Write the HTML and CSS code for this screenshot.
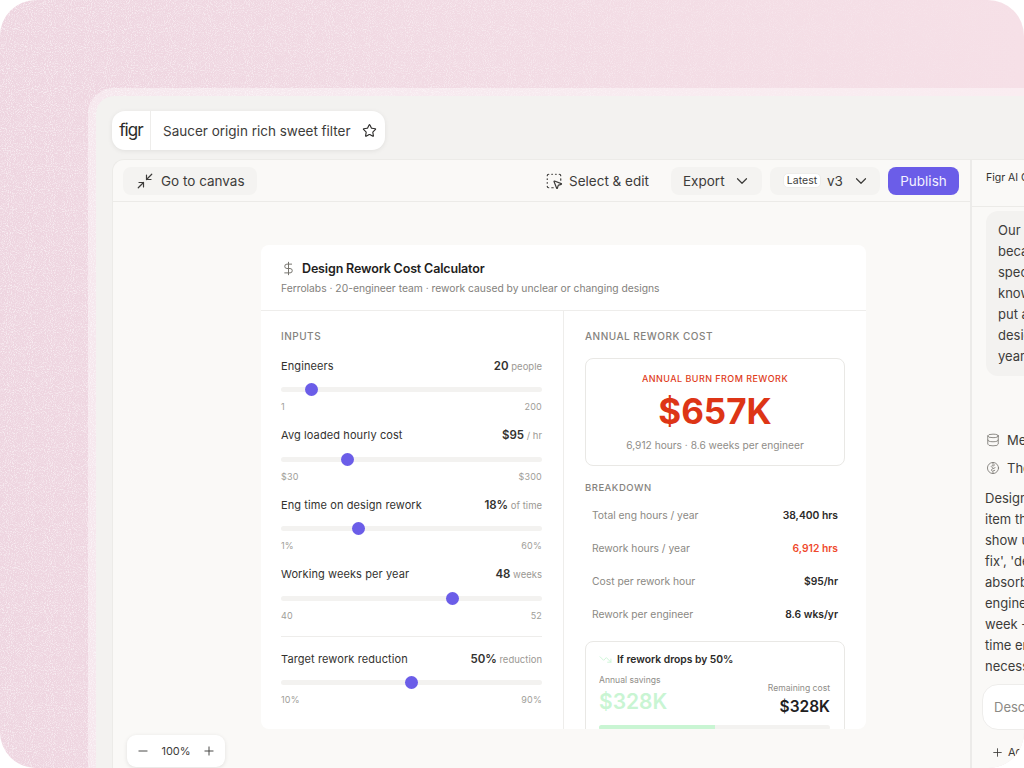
FILE: index.html
```html
<!DOCTYPE html>
<html>
<head>
    <title>Saucer origin rich sweet filter</title>
    <link rel="stylesheet" href="styles.css">
</head>
<body>
<div class="frame">
    <svg class="noise" width="1024" height="768">
        <defs>
            <filter id="grain" x="0" y="0" width="100%" height="100%">
                <feTurbulence type="fractalNoise" baseFrequency="0.95" numOctaves="2" seed="4"/>
                <feColorMatrix values="0 0 0 0 1  0 0 0 0 1  0 0 0 0 1  3.2 0 0 0 -1.45"/>
            </filter>
            <linearGradient id="fade">
                <stop offset="0" stop-color="#fff" stop-opacity="0.55"/>
                <stop offset="0.5" stop-color="#fff" stop-opacity="0.4"/>
                <stop offset="1" stop-color="#fff" stop-opacity="0.06"/>
            </linearGradient>
            <mask id="fade-mask"><rect width="1024" height="768" fill="url(#fade)"/></mask>
        </defs>
        <g mask="url(#fade-mask)"><rect width="1024" height="768" filter="url(#grain)"/></g>
    </svg>

    <div class="app">
        <div class="title-pill">
            <span class="logo">figr</span>
            <span class="title-text">Saucer origin rich sweet filter</span>
            <svg class="icon star" viewBox="0 0 24 24"><path d="M11.5 2.8a.55.55 0 0 1 1 0l2.5 5.1a1 1 0 0 0 .75.55l5.6.82a.55.55 0 0 1 .3.94l-4.05 3.95a1 1 0 0 0-.29.88l.96 5.58a.55.55 0 0 1-.8.58l-5-2.63a1 1 0 0 0-.93 0l-5 2.63a.55.55 0 0 1-.8-.58l.96-5.58a1 1 0 0 0-.29-.88L2.36 10.2a.55.55 0 0 1 .3-.94l5.6-.82a1 1 0 0 0 .75-.55z"/></svg>
        </div>

        <div class="workspace">
            <div class="main">
                <div class="toolbar">
                    <div class="btn canvas-btn">
                        <svg class="icon" viewBox="0 0 24 24"><path d="m14 10 7-7"/><path d="M20 10h-6V4"/><path d="m3 21 7-7"/><path d="M4 14h6v6"/></svg>
                        Go to canvas
                    </div>
                    <div class="btn select-btn">
                        <svg class="icon" viewBox="0 0 24 24"><path d="M12.034 12.681a.498.498 0 0 1 .647-.647l9 3.5a.5.5 0 0 1-.033.943l-3.444 1.068a1 1 0 0 0-.66.66l-1.067 3.443a.5.5 0 0 1-.943.033z"/><path d="M5 3a2 2 0 0 0-2 2"/><path d="M19 3a2 2 0 0 1 2 2"/><path d="M5 21a2 2 0 0 1-2-2"/><path d="M9 3h1"/><path d="M9 21h2"/><path d="M14 3h1"/><path d="M3 9v1"/><path d="M21 9v2"/><path d="M3 14v1"/></svg>
                        Select &amp; edit
                    </div>
                    <div class="btn export-btn">
                        Export
                        <svg class="icon" viewBox="0 0 24 24"><path d="m6 9 6 6 6-6"/></svg>
                    </div>
                    <div class="btn version-btn">
                        <span class="chip">Latest</span>
                        v3
                        <svg class="icon" viewBox="0 0 24 24"><path d="m6 9 6 6 6-6"/></svg>
                    </div>
                    <div class="btn publish-btn">Publish</div>
                </div>

                <div class="canvas">
                    <div class="card">
                        <div class="card-head">
                            <div class="card-title">
                                <svg class="icon" viewBox="0 0 24 24"><path d="M12 2v20"/><path d="M17 5H9.5a3.5 3.5 0 0 0 0 7h5a3.5 3.5 0 0 1 0 7H6"/></svg>
                                Design Rework Cost Calculator
                            </div>
                            <p class="card-sub">Ferrolabs · 20-engineer team · rework caused by unclear or changing designs</p>
                        </div>
                        <div class="card-body">
                            <div class="inputs">
                                <h4 class="section-label">INPUTS</h4>

                                <div class="field">
                                    <div class="field-top"><span>Engineers</span><span class="val"><b>20</b> people</span></div>
                                    <input type="range" min="1" max="200" value="20">
                                    <div class="field-range"><span>1</span><span>200</span></div>
                                </div>
                                <div class="field">
                                    <div class="field-top"><span>Avg loaded hourly cost</span><span class="val"><b>$95</b> / hr</span></div>
                                    <input type="range" min="30" max="300" value="95">
                                    <div class="field-range"><span>$30</span><span>$300</span></div>
                                </div>
                                <div class="field">
                                    <div class="field-top"><span>Eng time on design rework</span><span class="val"><b>18%</b> of time</span></div>
                                    <input type="range" min="1" max="60" value="18">
                                    <div class="field-range"><span>1%</span><span>60%</span></div>
                                </div>
                                <div class="field">
                                    <div class="field-top"><span>Working weeks per year</span><span class="val"><b>48</b> weeks</span></div>
                                    <input type="range" min="40" max="52" value="48">
                                    <div class="field-range"><span>40</span><span>52</span></div>
                                </div>

                                <div class="field target">
                                    <div class="field-top"><span>Target rework reduction</span><span class="val"><b>50%</b> reduction</span></div>
                                    <input type="range" min="10" max="90" value="50">
                                    <div class="field-range"><span>10%</span><span>90%</span></div>
                                </div>
                            </div>

                            <div class="results">
                                <h4 class="section-label">ANNUAL REWORK COST</h4>
                                <div class="burn">
                                    <div class="burn-label">ANNUAL BURN FROM REWORK</div>
                                    <div class="burn-num">$657K</div>
                                    <div class="burn-sub">6,912 hours · 8.6 weeks per engineer</div>
                                </div>

                                <h4 class="section-label small">BREAKDOWN</h4>
                                <div class="row"><span>Total eng hours / year</span><b>38,400 hrs</b></div>
                                <div class="row"><span>Rework hours / year</span><b class="red">6,912 hrs</b></div>
                                <div class="row"><span>Cost per rework hour</span><b>$95/hr</b></div>
                                <div class="row"><span>Rework per engineer</span><b>8.6 wks/yr</b></div>

                                <div class="savings">
                                    <div class="savings-title">
                                        <svg class="icon" viewBox="0 0 24 24"><path d="M16 17h6v-6"/><path d="m22 17-8.5-8.5-5 5L2 7"/></svg>
                                        If rework drops by 50%
                                    </div>
                                    <div class="savings-nums">
                                        <div>
                                            <div class="savings-label">Annual savings</div>
                                            <div class="savings-green">$328K</div>
                                        </div>
                                        <div class="savings-right">
                                            <div class="savings-label">Remaining cost</div>
                                            <div class="savings-dark">$328K</div>
                                        </div>
                                    </div>
                                    <div class="bar"><div class="bar-fill"></div></div>
                                </div>
                            </div>
                        </div>
                    </div>

                    <div class="zoom-pill">
                        <svg class="icon" viewBox="0 0 24 24"><path d="M5 12h14"/></svg>
                        <span>100%</span>
                        <svg class="icon" viewBox="0 0 24 24"><path d="M5 12h14"/><path d="M12 5v14"/></svg>
                    </div>
                </div>
            </div>

            <div class="chat">
                <div class="chat-head">Figr AI Chat</div>
                <div class="bubble">Our engineers keep redoing work<br>because designs change late and<br>specs are vague. We don't really<br>know what it costs us. Can you<br>put a number on how much<br>design rework burns every<br>year at Ferrolabs?</div>
                <div class="step step-first">
                    <svg class="icon" viewBox="0 0 24 24"><ellipse cx="12" cy="5" rx="9" ry="3"/><path d="M3 5v14a9 3 0 0 0 18 0V5"/><path d="M3 12a9 3 0 0 0 18 0"/></svg>
                    Memory
                </div>
                <div class="step">
                    <svg class="icon" viewBox="0 0 24 24"><circle cx="12" cy="12" r="9.5"/><path d="M12 2.5v4l-3 3 3 3-3 3 3 3v3"/><path d="M12 9l3-2.5M12 13l3.5-1.5M12 17l3-1"/></svg>
                    Thought
                </div>
                <div class="reply">Design rework is the line<br>item that never shows up on<br>show up in a budget: 'quick<br>fix', 'design tweak' and more<br>absorbed silently by the<br>engineers, a few hours each<br>week - so this tool prices the<br>time engineers spend on un-<br>necessary rework every year.</div>
                <div class="prompt">Describe what to change</div>
                <div class="prompt-tools">
                    <svg class="icon" viewBox="0 0 24 24"><path d="M5 12h14"/><path d="M12 5v14"/></svg>
                    Add
                </div>
            </div>
        </div>
    </div>
</div>
</body>
</html>
```

FILE: styles.css
```css
* {
    margin: 0;
    padding: 0;
    box-sizing: border-box;
    font-family: Inter, "Liberation Sans", sans-serif;
}

body {
    background: #fff;
    width: 1024px;
    height: 768px;
    overflow: hidden;
}

.icon {
    fill: none;
    stroke: currentColor;
    stroke-width: 1.6;
    stroke-linecap: round;
    stroke-linejoin: round;
    flex: none;
}

.frame {
    position: relative;
    width: 1024px;
    height: 768px;
    border-radius: 36px;
    overflow: hidden;
    background: linear-gradient(90deg, #eed5e0, #f2dbe4 50%, #f6e0e7);
    padding: 88px 0 0 88px;
}

.noise {
    position: absolute;
    left: 0;
    top: 0;
}

.app {
    position: relative;
    width: 936px;
    height: 680px;
    background: #f3f2f0;
    background-clip: padding-box;
    border: 8px solid rgba(255, 255, 255, 0.42);
    border-width: 8px 0 0 8px;
    border-top-left-radius: 26px;
    padding: 15px 0 0 16px;
    display: flex;
    flex-direction: column;
    gap: 9px;
}

/* title pill */
.title-pill {
    width: 273px;
    height: 39px;
    background: #fff;
    border-radius: 13px;
    box-shadow: 0 1px 5px rgba(0, 0, 0, 0.08);
    display: flex;
    align-items: center;
    flex: none;
    color: #3d3c3a;
}

.logo {
    width: 39px;
    height: 39px;
    line-height: 38px;
    text-align: center;
    font-size: 17px;
    letter-spacing: -0.9px;
    color: #2c2b2a;
    border-right: 1px solid #eeedeb;
    flex: none;
}

.title-text {
    font-size: 13.5px;
    margin-left: 12px;
    white-space: nowrap;
}

.star {
    width: 15px;
    height: 15px;
    margin-left: 11px;
    stroke-width: 1.8;
    color: #2c2b2a;
}

/* workspace */
.workspace {
    flex: 1;
    display: flex;
    background: #faf9f7;
    border: 1px solid #ecebe8;
    border-width: 1px 0 0 1px;
    border-top-left-radius: 12px;
    min-height: 0;
}

.main {
    width: 857px;
    flex: none;
    display: flex;
    flex-direction: column;
    position: relative;
}

.toolbar {
    height: 42px;
    border-bottom: 1px solid #ecebe8;
    display: flex;
    align-items: center;
    padding: 0 10px;
    flex: none;
}

.btn {
    height: 28px;
    border-radius: 8px;
    display: flex;
    align-items: center;
    font-size: 13.5px;
    color: #3d3c3a;
    background: #f4f3f1;
    white-space: nowrap;
}

.btn .icon {
    width: 18px;
    height: 18px;
}

.canvas-btn {
    width: 134px;
    padding-left: 13px;
    gap: 7px;
    margin-right: 288px;
}

.select-btn {
    background: none;
    width: 106px;
    gap: 6px;
    margin-right: 20px;
}

.export-btn {
    width: 91px;
    padding-left: 12px;
    gap: 8px;
    margin-right: 8px;
}

.version-btn {
    width: 110px;
    padding-left: 13px;
    margin-right: 8px;
}

.version-btn .icon {
    margin-left: 9px;
}

.chip {
    width: 38px;
    height: 15px;
    line-height: 14px;
    text-align: center;
    font-size: 10.5px;
    background: #fff;
    border: 1px solid #eeedeb;
    border-radius: 5px;
    margin-right: 6px;
}

.publish-btn {
    width: 71px;
    justify-content: center;
    background: #6b5de8;
    color: #f3f1ff;
}

.canvas {
    flex: 1;
    padding: 43px 0 0 148px;
    min-height: 0;
}

/* calculator card */
.card {
    width: 605px;
    height: 484px;
    background: #fff;
    border-radius: 8px;
    overflow: hidden;
}

.card-head {
    height: 66px;
    border-bottom: 1px solid #eeedeb;
    padding: 13px 20px 0;
}

.card-title {
    display: flex;
    align-items: center;
    gap: 6px;
    font-size: 12.5px;
    letter-spacing: -0.15px;
    font-weight: 600;
    color: #1f1e1d;
    height: 20px;
}

.card-title .icon {
    width: 15px;
    height: 15px;
    color: #77756f;
}

.card-sub {
    font-size: 10.3px;
    color: #83817c;
    margin-top: 4px;
}

.card-body {
    display: flex;
}

.inputs {
    width: 303px;
    padding: 19px 21px 0 20px;
    border-right: 1px solid #eeedeb;
    height: 420px;
    flex: none;
}

.results {
    flex: 1;
    padding: 19px 21px 0 21px;
}

.section-label {
    font-size: 10px;
    line-height: 12px;
    font-weight: 500;
    color: #85837e;
    letter-spacing: 0.5px;
    margin-bottom: 16px;
}

.inputs .section-label {
    margin-bottom: 15.75px;
}

.section-label.small {
    margin: 16px 0 4px;
    font-size: 9.5px;
}

.field {
    height: 69.5px;
}

.field-top {
    display: flex;
    justify-content: space-between;
    align-items: baseline;
    font-size: 11px;
    line-height: 16px;
    color: #33322f;
    letter-spacing: 0.1px;
}

.val {
    font-size: 9.5px;
    color: #9b9994;
    letter-spacing: 0;
}

.val b {
    font-size: 11.5px;
    font-weight: 600;
    color: #33322f;
}

input[type=range] {
    display: block;
    width: 261px;
    height: 13px;
    margin-top: 8.25px;
    background: transparent;
    -webkit-appearance: none;
    appearance: none;
}

input[type=range]::-webkit-slider-runnable-track {
    height: 5px;
    background: #f3f2f0;
    border-radius: 3px;
}

input[type=range]::-webkit-slider-thumb {
    -webkit-appearance: none;
    width: 13px;
    height: 13px;
    margin-top: -4px;
    border-radius: 50%;
    background: #6b5de8;
}

.field-range {
    display: flex;
    justify-content: space-between;
    font-size: 9px;
    line-height: 12px;
    color: #a09e99;
    margin-top: 5px;
    letter-spacing: 0.2px;
}

.target {
    border-top: 1px solid #eeedeb;
    padding-top: 14px;
    height: auto;
}

/* right column */
.burn {
    height: 108px;
    border: 1px solid #e9e8e5;
    border-radius: 8px;
    text-align: center;
    padding-top: 14px;
}

.burn-label {
    font-size: 9px;
    line-height: 12px;
    font-weight: 500;
    color: #e03c1c;
    letter-spacing: 0.45px;
}

.burn-num {
    font-size: 35px;
    line-height: 52px;
    font-weight: 700;
    color: #dd3516;
}

.burn-sub {
    font-size: 10.2px;
    line-height: 14px;
    color: #8f8d88;
    margin-top: 1px;
}

.row {
    height: 33px;
    padding: 0 7px;
    display: flex;
    justify-content: space-between;
    align-items: center;
    font-size: 10.3px;
    color: #8b8984;
}

.row b {
    font-weight: 600;
    color: #2b2a28;
}

.row b.red {
    color: #ef4a2d;
}

.savings {
    margin-top: 11px;
    border: 1px solid #e9e8e5;
    border-radius: 8px;
    padding: 10px 14px 0 13px;
    height: 110px;
}

.savings-title {
    display: flex;
    align-items: center;
    gap: 5px;
    font-size: 10.3px;
    line-height: 14px;
    font-weight: 600;
    color: #2b2a28;
}

.savings-title .icon {
    width: 13px;
    height: 13px;
    color: #c9f5d3;
}

.savings-nums {
    display: flex;
    justify-content: space-between;
    margin-top: 8px;
    height: 51px;
}

.savings-right {
    text-align: right;
    padding-top: 8px;
}

.savings-label {
    font-size: 8.6px;
    line-height: 12px;
    color: #8f8d88;
}

.savings-green {
    font-size: 21px;
    line-height: 32px;
    font-weight: 600;
    color: #c9f5d3;
}

.savings-dark {
    font-size: 15.5px;
    line-height: 26px;
    font-weight: 600;
    color: #22211f;
}

.bar {
    height: 5px;
    background: #f3f2f0;
    border-radius: 3px;
    overflow: hidden;
}

.bar-fill {
    width: 50%;
    height: 100%;
    background: #c9f5d3;
}

/* zoom control sits over the canvas */
.zoom-pill {
    position: absolute;
    left: 14px;
    top: 575px;
    width: 98px;
    height: 32px;
    background: #fff;
    border-radius: 9px;
    box-shadow: 0 1px 4px rgba(0, 0, 0, 0.1);
    display: flex;
    align-items: center;
    justify-content: space-between;
    padding: 0 9px;
    font-size: 11px;
    color: #3d3c3a;
}

.zoom-pill .icon {
    width: 14px;
    height: 14px;
}

/* chat panel */
.chat {
    flex: 1;
    border-left: 2px solid #ecebe9;
    overflow: hidden;
    white-space: nowrap;
    color: #3d3c3a;
    font-size: 13px;
    line-height: 21px;
}

.chat-head {
    height: 47px;
    border-bottom: 1px solid #ecebe8;
    padding: 8px 0 0 14px;
    font-size: 10.5px;
    font-weight: 400;
    color: #33322f;
    line-height: 20px;
}

.bubble {
    width: 200px;
    height: 165px;
    margin: 4px 0 0 14px;
    background: #f3f2f0;
    border-radius: 12px;
    padding: 9px 0 0 12px;
}

.step {
    height: 28px;
    display: flex;
    align-items: center;
    gap: 7px;
    padding-left: 14px;
}

.step .icon {
    width: 14px;
    height: 14px;
    stroke-width: 1.4;
    color: #77756f;
}

.step-first {
    margin-top: 50px;
}

.reply {
    padding: 6px 0 0 13px;
}

.prompt {
    width: 200px;
    height: 46px;
    margin: 7px 0 0 10px;
    background: #fff;
    border: 1px solid #eeedeb;
    border-radius: 16px;
    padding: 12px 0 0 11px;
    color: #8b8984;
}

.prompt-tools {
    display: flex;
    align-items: center;
    gap: 4px;
    padding: 12px 0 0 19px;
    font-size: 11px;
}

.prompt-tools .icon {
    width: 13px;
    height: 13px;
}
```
